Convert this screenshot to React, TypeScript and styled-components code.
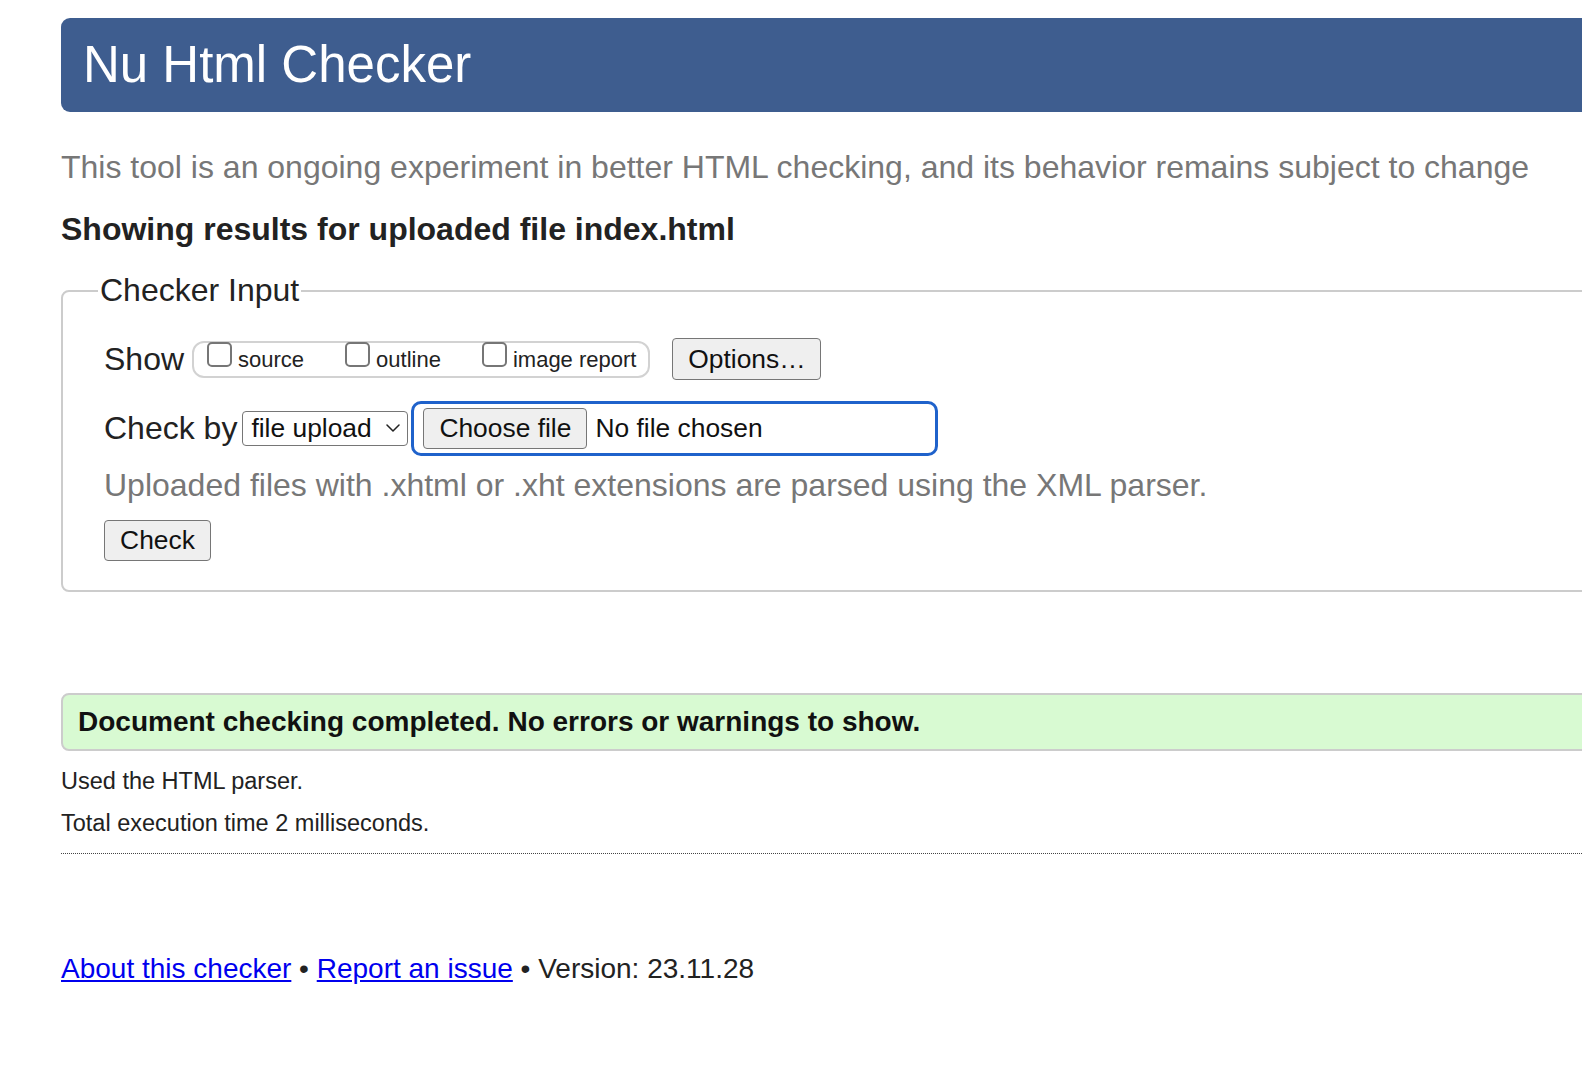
import React from "react";
import styled, { createGlobalStyle } from "styled-components";

const GlobalStyle = createGlobalStyle`
  html, body {
    margin: 0;
    padding: 0;
    background: #ffffff;
    overflow: hidden;
  }
  body {
    font-family: "Liberation Sans", Arial, Helvetica, sans-serif;
    color: #222222;
  }
`;

const Page = styled.div`
  padding: 18px 0 0 61px;
`;

const Banner = styled.header`
  height: 94px;
  margin-right: -40px;
  padding-left: 22px;
  background: #3e5d8f;
  border-radius: 9px 0 0 9px;
`;

const Title = styled.h1`
  margin: 0;
  font-size: 51px;
  font-weight: 400;
  line-height: 94px;
  color: #ffffff;
`;

const Intro = styled.p`
  margin: 35px 0 0;
  font-size: 32px;
  line-height: 40px;
  color: #777777;
  white-space: nowrap;
`;

const ResultsHeading = styled.h2`
  margin: 22px 0 0;
  font-size: 32px;
  font-weight: 700;
  line-height: 40px;
  color: #222222;
`;

const InputSet = styled.fieldset`
  margin: 22px -40px 0 0;
  min-width: 0;
  padding: 14px 0 29px 41px;
  border: 2px solid #cccccc;
  border-radius: 8px;
`;

const Legend = styled.legend`
  margin-left: -6px;
  padding: 3px 2px 5px;
  font-size: 32px;
  line-height: 32px;
  color: #222222;
`;

const Row = styled.div<{ $h: number; $mt?: number }>`
  display: flex;
  align-items: center;
  height: ${(p) => p.$h}px;
  margin-top: ${(p) => p.$mt ?? 0}px;
`;

const RowLabel = styled.span<{ $mr: number }>`
  font-size: 32px;
  line-height: 40px;
  color: #222222;
  margin-right: ${(p) => p.$mr}px;
  white-space: nowrap;
`;

const ShowBox = styled.div`
  box-sizing: border-box;
  display: flex;
  align-items: flex-start;
  gap: 41px;
  height: 37px;
  padding: 0 12px 0 13px;
  border: 2px solid #d2d2d2;
  border-radius: 12px;
`;

const Option = styled.label`
  display: flex;
  align-items: flex-end;
`;

const Box = styled.input`
  appearance: none;
  box-sizing: border-box;
  width: 25px;
  height: 25px;
  margin: -1px 0 0;
  border: 2px solid #767676;
  border-radius: 5px;
  background: #ffffff;
`;

const OptionText = styled.span`
  margin: 0 0 -4px 6px;
  font-size: 22px;
  line-height: 22px;
  color: #222222;
  white-space: nowrap;
`;

const Btn = styled.button<{ $w: number; $h: number; $ml?: number }>`
  box-sizing: border-box;
  width: ${(p) => p.$w}px;
  height: ${(p) => p.$h}px;
  margin-left: ${(p) => p.$ml ?? 0}px;
  padding: 0;
  font-family: inherit;
  font-size: 26.4px;
  line-height: 1;
  color: #111111;
  background: #efefef;
  border: 1.5px solid #767676;
  border-radius: 4px;
  white-space: nowrap;
`;

const Select = styled.div`
  box-sizing: border-box;
  display: flex;
  align-items: center;
  justify-content: space-between;
  width: 166px;
  height: 35px;
  padding: 0 7px 0 8px;
  border: 1.5px solid #767676;
  border-radius: 4px;
  font-size: 26.4px;
  color: #111111;
  white-space: nowrap;
`;

const FileBox = styled.div`
  box-sizing: border-box;
  display: flex;
  align-items: center;
  width: 527px;
  height: 55px;
  margin-left: 3px;
  padding-left: 9px;
  border: 3px solid #1f62cb;
  border-radius: 10px;
`;

const FileStatus = styled.span`
  margin-left: 8px;
  font-size: 26.4px;
  color: #111111;
  white-space: nowrap;
`;

const Hint = styled.div`
  font-size: 32px;
  line-height: 44px;
  color: #777777;
  white-space: nowrap;
`;

const Success = styled.p`
  box-sizing: border-box;
  height: 58px;
  margin: 101px -40px 0 0;
  padding-left: 15px;
  background: #d8fad2;
  border: 2px solid #cccccc;
  border-radius: 8px;
  font-size: 28px;
  font-weight: 700;
  line-height: 54px;
  color: #111111;
`;

const Details = styled.div`
  margin: 9px -40px 0 0;
  padding-bottom: 9px;
  border-bottom: 1px dotted #444444;
`;

const DetailLine = styled.p`
  margin: 0;
  font-size: 23.5px;
  line-height: 42px;
  color: #222222;
`;

const Footer = styled.footer`
  margin-top: 95px;
  font-size: 28px;
  line-height: 40px;
  color: #222222;
  white-space: nowrap;
`;

const FooterLink = styled.a`
  color: #0000ee;
  text-decoration: underline;
`;

const Chevron = () => (
  <svg width="14" height="8" viewBox="0 0 14 8" aria-hidden="true">
    <polyline
      points="1,1 7,7 13,1"
      fill="none"
      stroke="#222"
      strokeWidth="1.5"
      strokeLinecap="round"
      strokeLinejoin="round"
    />
  </svg>
);

const options = ["source", "outline", "image report"];

export default function App() {
  return (
    <>
      <GlobalStyle />
      <Page>
        <Banner>
          <Title>Nu Html Checker</Title>
        </Banner>
        <Intro>
          This tool is an ongoing experiment in better HTML checking, and its
          behavior remains subject to change
        </Intro>
        <ResultsHeading>Showing results for uploaded file index.html</ResultsHeading>
        <InputSet>
          <Legend>Checker Input</Legend>
          <Row $h={68}>
            <RowLabel $mr={8}>Show</RowLabel>
            <ShowBox>
              {options.map((o) => (
                <Option key={o}>
                  <Box type="checkbox" />
                  <OptionText>{o}</OptionText>
                </Option>
              ))}
            </ShowBox>
            <Btn type="button" $w={149} $h={42} $ml={22}>
              Options…
            </Btn>
          </Row>
          <Row $h={70}>
            <RowLabel $mr={5}>Check by</RowLabel>
            <Select>
              <span>file upload</span>
              <Chevron />
            </Select>
            <FileBox>
              <Btn type="button" $w={164} $h={41}>
                Choose file
              </Btn>
              <FileStatus>No file chosen</FileStatus>
            </FileBox>
          </Row>
          <Hint>
            Uploaded files with .xhtml or .xht extensions are parsed using the
            XML parser.
          </Hint>
          <Row $h={41} $mt={13}>
            <Btn type="button" $w={107} $h={41}>
              Check
            </Btn>
          </Row>
        </InputSet>
        <Success>Document checking completed. No errors or warnings to show.</Success>
        <Details>
          <DetailLine>Used the HTML parser.</DetailLine>
          <DetailLine>Total execution time 2 milliseconds.</DetailLine>
        </Details>
        <Footer>
          <FooterLink href="#about">About this checker</FooterLink> •{" "}
          <FooterLink href="#issue">Report an issue</FooterLink> • Version: 23.11.28
        </Footer>
      </Page>
    </>
  );
}
